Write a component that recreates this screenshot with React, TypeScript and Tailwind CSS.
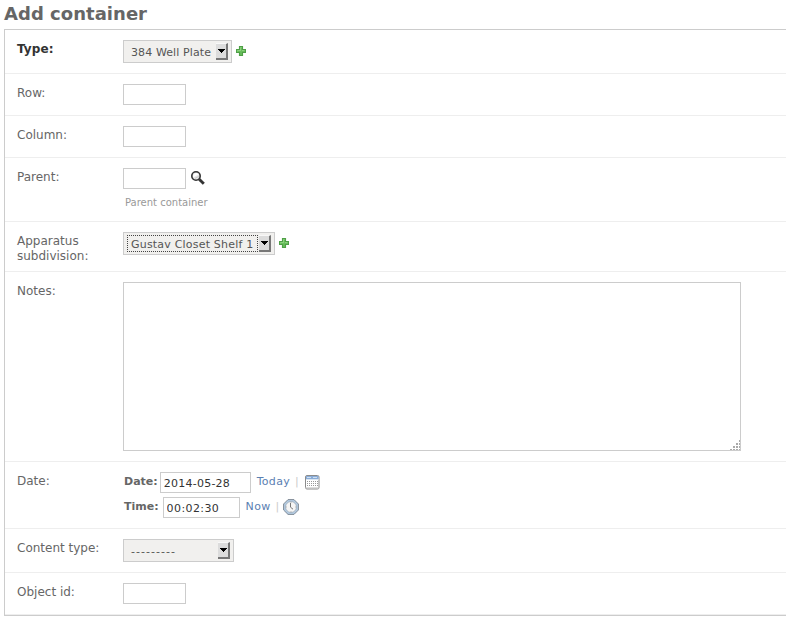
import React from 'react';

function Row({ label, height, bold, children }: { label: string; height: string; bold?: boolean; children: React.ReactNode }) {
  return (
    <div className={`flex items-start border-b border-[#eee] pl-3 pt-2.5 ${height}`}>
      <div className={`mt-[2px] w-[106px] shrink-0 pr-4 leading-[15px] ${bold ? 'font-bold tracking-[0.1px] text-[#333]' : 'text-[#666]'}`}>{label}</div>
      <div className="min-w-0">{children}</div>
    </div>
  );
}

function Field({ value, width = 'w-[63px]', tracking = 'tracking-[0.25px]' }: { value?: string; width?: string; tracking?: string }) {
  return <input type="text" defaultValue={value} className={`block h-[21px] shrink-0 border border-[#ccc] bg-white px-[3px] pt-[2px] pb-0 text-[11px] text-[#333] outline-none ${tracking} ${width}`} />;
}

function Select({ value, width, focused, tracking = 'tracking-[0.2px]' }: { value: string; width: string; focused?: boolean; tracking?: string }) {
  return (
    <div className={`flex h-[23px] shrink-0 items-center justify-between border border-[#ccc] bg-[#f1f0ee] pr-[3px] pl-[3px] text-[11px] text-[#555] ${width}`}>
      <span className={`flex h-[17px] shrink-0 items-start border pt-[2px] pl-[3px] leading-[13px] whitespace-nowrap ${tracking} ${focused ? 'w-[131px] border-dotted border-[#444]' : 'border-transparent'}`}>{value}</span>
      <span className="flex h-[17px] w-[12px] shrink-0 justify-center border-t border-r-2 border-b-2 border-t-[#f8f8f8] border-r-[#777] border-b-[#777] bg-[#dcdcdc] pt-[5px]">
        <svg width="7" height="4" viewBox="0 0 7 4" shapeRendering="crispEdges"><path d="M0 0h7v1H6v1H5v1H4v1H3V3H2V2H1V1H0z" fill="#000" /></svg>
      </span>
    </div>
  );
}

function Plus() {
  return (
    <svg className="mt-1.5 ml-1 shrink-0" width="10" height="10" viewBox="0 0 10 10">
      <path d="M3.5 .5h3v3h3v3h-3v3h-3v-3h-3v-3h3z" fill="#68bd5b" stroke="#4f9f47" strokeWidth="1.15" />
      <path d="M4.5 5V1.5h1M1.5 5.5v-1h3M6 4.5h2.5" fill="none" stroke="#8bd17d" />
    </svg>
  );
}

function Magnifier() {
  return (
    <svg className="mt-[3px] ml-[5px]" width="14" height="14" viewBox="0 0 14 14">
      <path d="M8.2 8.2l4.6 4.6" stroke="#333" strokeWidth="2.9" />
      <circle cx="5" cy="5" r="4.2" fill="#e6e6e6" stroke="#333" strokeWidth="1.6" />
      <path d="M2 6C2 3.5 3.5 2 6 2L7.7 4C5.5 4 4.3 6 2 6z" fill="#fff" />
      <path d="M4 7.5Q6 5.8 8 5.7" stroke="#ccc" fill="none" />
    </svg>
  );
}

function Calendar() {
  return (
    <svg className="mt-[3px] ml-[6.5px]" width="15" height="15" viewBox="0 0 15 15">
      <rect x=".5" y=".5" width="13.5" height="13.5" rx="1.5" fill="#fff" stroke="#8b8b8b" />
      <path d="M1 1h12.5v3H1z" fill="#8badd8" />
      <path d="M2 2.5h4M8 2.5h4" stroke="#cfe0f2" />
      <path d="M1 4.5h12.5" stroke="#d9e5f2" />
      <path d="M2 6.5h11M2 8.5h11M2 10.5h11" stroke="#999" strokeDasharray="1 1" />
      <path d="M1 13h13" stroke="#bbb" />
    </svg>
  );
}

function Clock() {
  return (
    <svg className="mt-[2px] ml-[3.5px]" width="16" height="16" viewBox="0 0 16 16">
      <path d="M5 .6h6L15.4 5v6L11 15.4H5L.6 11V5z" fill="#b3cce4" stroke="#808b96" />
      <circle cx="8" cy="8" r="5.5" fill="#f5f5f5" stroke="#9aa9b7" strokeWidth=".8" />
      <path d="M7.5 4v4.2l2.5 2" stroke="#777" fill="none" />
      <path d="M8 3v1M8 12v1M3 8h1M12 8h1" stroke="#bbb" />
    </svg>
  );
}

function DateLine({ label, value, width, link, gap, tracking, children }: { label: string; value: string; width: string; link: string; gap: string; tracking?: string; children: React.ReactNode }) {
  return (
    <div className="flex items-start pl-px text-[11px] leading-[15px]">
      <b className={`mt-[2px] text-[#666] ${gap}`}>{label}</b>
      <Field value={value} width={width} tracking={tracking} />
      <a className="mt-[2px] ml-1.5 tracking-[0.3px] text-[#5b80b2]">{link}</a>
      <span className="mt-[2px] ml-[5px] text-[#ccc]">|</span>
      {children}
    </div>
  );
}

export default function App() {
  return (
    <main className="h-[621px] w-full overflow-hidden bg-white pl-1 font-['DejaVu_Sans',sans-serif] text-[12px]">
      <h1 className="h-[29px] pt-[3px] text-[18px] leading-[21px] font-bold tracking-[0.03px] text-[#666]">Add container</h1>
      <div className="border-y border-l border-[#ccc]">
        <Row label="Type:" height="h-11" bold>
          <div className="flex"><Select value="384 Well Plate" width="w-[109px]" tracking="tracking-[0.1px]" /><Plus /></div>
        </Row>
        <Row label="Row:" height="h-[42px]"><Field /></Row>
        <Row label="Column:" height="h-[42px]"><Field /></Row>
        <Row label="Parent:" height="h-16">
          <div className="flex"><Field /><Magnifier /></div>
          <p className="mt-[6px] ml-[2px] text-[10px] leading-[15px] text-[#999]">Parent container</p>
        </Row>
        <Row label="Apparatus subdivision:" height="h-[50px]">
          <div className="flex"><Select value="Gustav Closet Shelf 1" width="w-[152px]" focused /><Plus /></div>
        </Row>
        <Row label="Notes:" height="h-[190px]">
          <div className="flex h-[169px] w-[618px] items-end justify-end border border-[#ccc]">
            <svg width="10" height="10" viewBox="0 0 10 10" shapeRendering="crispEdges">
              <path d="M9 0h1v2H9zM6 3h2v2H6zM9 3h1v2H9zM3 6h2v2H3zM6 6h2v2H6zM9 6h1v2H9zM0 9h2v1H0zM3 9h2v1H3zM6 9h2v1H6zM9 9h1v1H9z" fill="#aaa" />
            </svg>
          </div>
        </Row>
        <Row label="Date:" height="h-[67px]">
          <div className="flex flex-col gap-1">
            <DateLine label="Date:" value="2014-05-28" width="w-[91px]" link="Today" gap="mr-[2px]"><Calendar /></DateLine>
            <DateLine label="Time:" value="00:02:30" width="w-[77px]" link="Now" gap="mr-[4px]" tracking="tracking-[0.4px]"><Clock /></DateLine>
          </div>
        </Row>
        <Row label="Content type:" height="h-11"><Select value="---------" width="w-[111px]" tracking="tracking-[1.03px]" /></Row>
        <Row label="Object id:" height="h-[42px]"><Field /></Row>
      </div>
    </main>
  );
}
